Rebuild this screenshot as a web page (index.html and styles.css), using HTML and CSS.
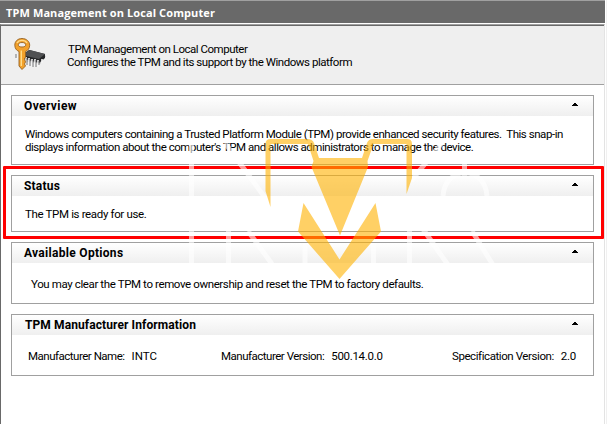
FILE: index.html
```html
<!DOCTYPE html>
<html lang="en">
<head>
<meta charset="utf-8">
<title>TPM Management on Local Computer</title>
<link rel="stylesheet" href="styles.css">
</head>
<body>
<div class="window">
  <div class="titlebar"><span>TPM Management on Local Computer</span></div>
  <main class="content">
    <header class="intro">
      <svg class="key-icon" width="34" height="34" viewBox="0 0 34 34">
        <path d="M11 16l4-3 17 5-6 8-17-3z" fill="#77777a" opacity=".4"/>
        <path d="M7 18l8-6 16 4v4l-6 5L7 20z" fill="#252628"/>
        <path d="M8 17l8-5 15 4-6 5z" fill="#505153"/>
        <path d="M3 16v5M12 19v8M15 20v8M18 21v8M21 21v8M24 22v7M28 21v4" stroke="#f5f5f5" stroke-width="1.6"/>
        <path d="M2 16v4M13 20v7M16 21v7M19 22v7M22 22v7M25 23v4" stroke="#66676a" stroke-width=".9"/>
        <path d="M8 .5C3.500 .5.800 3.500.800 7.200c0 3 1.700 5.300 4.200 6.300v14.500l3 3.500 3.500-3.500-1-2 1-2-1-3 1-2v-5.500c2.500-1 4.200-3.300 4.200-6.300C15.700 3.500 12.500.5 8 .5zm0 4c2.500 0 3.700 1 3.700 2.300S10.500 9 8 9 4.300 8.100 4.300 6.800 5.500 4.500 8 4.500z" fill="#f2a12b" fill-rule="evenodd" stroke="#966223" stroke-width=".9"/>
        <path d="M7.300 12.500V28M3 5c2-3.500 8-3.500 10 0" stroke="#ffdc8a" stroke-width="1.400" fill="none"/>
      </svg>
      <div class="intro-text"><p class="l1">TPM Management on Local Computer</p><p class="l2">Configures the TPM and its support by the Windows platform</p></div>
    </header>
    <div class="panels">
      <section class="panel overview">
        <h2 class="h-overview">Overview<svg class="arrow" width="6" height="3" shape-rendering="crispEdges"><path d="M2 0h2v1h1v1h1v1H0V2h1V1h1z"/></svg></h2>
        <div class="body"><p class="o1">Windows computers containing a Trusted Platform Module (TPM) provide enhanced security features.&nbsp; This snap-in</p><p class="o2">displays information about the computer's TPM and allows administrators to manage the device.</p></div>
      </section>
      <section class="panel status">
        <h2 class="h-status">Status<svg class="arrow" width="6" height="3" shape-rendering="crispEdges"><path d="M2 0h2v1h1v1h1v1H0V2h1V1h1z"/></svg></h2>
        <div class="body"><p class="s1">The TPM is ready for use.</p></div>
      </section>
      <section class="panel options">
        <h2 class="h-options">Available Options<svg class="arrow" width="6" height="3" shape-rendering="crispEdges"><path d="M2 0h2v1h1v1h1v1H0V2h1V1h1z"/></svg></h2>
        <div class="body"><p class="a1">You may clear the TPM to remove ownership and reset the TPM to factory defaults.</p></div>
      </section>
      <section class="panel maker">
        <h2 class="h-maker">TPM Manufacturer Information<svg class="arrow" width="6" height="3" shape-rendering="crispEdges"><path d="M2 0h2v1h1v1h1v1H0V2h1V1h1z"/></svg></h2>
        <div class="body facts"><p><span class="name">Manufacturer Name:</span><span>INTC</span></p><p><span class="name">Manufacturer Version:</span><span class="num">500.14.0.0</span></p><p><span class="spec">Specification Version:</span><span class="num">2.0</span></p></div>
      </section>
    </div>
  </main>
  <div class="highlight"></div>
  <svg class="watermark" width="607" height="424" viewBox="0 0 607 424">
    <g fill="none" stroke="#fff" stroke-width="5" opacity=".6">
      <path d="M191.500 143v121M225 143l41 56M228.500 230v34M248 231l24 33M305 243v21M373.500 243v21M409.500 230v35M442 143l-31 38M423 229l25 36M464.500 162v14M443 196c2-31 42-31 44 0M472 231l21 34"/>
    </g>
    <g fill="#ffb200" opacity=".6">
      <path d="M265.500 144q0-5 5-5h37q5 0 6.500 4l5 15h43l5-15q1.500-4 6-4h34q5 0 5 5v34l-5.500 16v-50h-33l-6 17 .5 6-28 68.500-28.500-68.500 2-6-5.500-17h-37.500v63l-5-16z"/>
      <path d="M303.500 203l36 56.500 36-56.500 5.500 28.500-41.500 47.500-41.500-47.500z"/>
    </g>
  </svg>
</div>
</body>
</html>
```
FILE: styles.css
```css
* { box-sizing: border-box; }
body { margin: 0; background: #fff; color: #000; font: 11.5px/13px Roboto, "Liberation Sans", sans-serif; }
p, h2 { margin: 0; }
p { white-space: nowrap; }
.window { position: relative; width: 607px; height: 424px; overflow: hidden; background: linear-gradient(90deg, #fff 606px, #f0f0f0 606px); }
.titlebar { width: 605px; height: 24px; padding: 5px 0 0 6px; background: #696969; border-top: 1px solid #a0a0a0; border-bottom: 1px solid #fff; color: #fff; font: bold 11px/13px "Open Sans", sans-serif; letter-spacing: .1px; }
.titlebar span { display: block; }
.content { width: 605px; height: 400px; border-top: 1px solid #a0a0a0; border-left: 1px solid #696969; border-right: 1px solid #e3e3e3; }
.intro { display: flex; width: 603px; height: 60px; border-top: 1px solid #696969; border-bottom: 1px solid #a0a0a0; background: #efefef; }
.key-icon { margin: 12px 0 0 13px; flex: none; }
.intro-text { padding: 17px 0 0 19px; }
.l1 { padding-left: 1px; letter-spacing: -.48px; }
.l2 { letter-spacing: -.46px; }
.panels { width: 583px; margin: 10px 0 0 10px; display: flex; flex-direction: column; }
.panel { border: 1px solid #a0a0a0; background: #fff; }
.overview { height: 70px; margin-bottom: 10px; }
.status { height: 57px; margin-bottom: 10px; }
.options { height: 62px; margin-bottom: 10px; }
.maker { height: 62px; }
h2 { display: flex; justify-content: space-between; height: 20px; padding: 4px 15px 0 12px; background: linear-gradient(#fff, #efefef); font: bold 12px/13px Roboto, "Liberation Sans", sans-serif; }
.arrow { margin-top: 3px; }
.h-overview { letter-spacing: .4px; }
.h-status { letter-spacing: .2px; }
.h-options { letter-spacing: .3px; }
.h-maker { letter-spacing: .1px; padding-left: 13px; }
.body { padding: 12px 0 0 13px; }
.o1 { letter-spacing: -.455px; }
.o2 { letter-spacing: -.475px; }
.s1 { letter-spacing: -.35px; }
.options .body { padding: 15px 0 0 19px; }
.a1 { letter-spacing: -.385px; }
.facts { display: grid; grid-template-columns: 193px 231px auto; padding: 15px 0 0 16px; }
.facts p { display: flex; gap: 7px; }
.name { letter-spacing: -.49px; }
.spec { letter-spacing: -.42px; }
.num { letter-spacing: -.3px; }
.highlight { position: absolute; left: 3px; top: 166px; width: 601px; height: 73px; border: 3px solid #f00; border-radius: 1px; }
.watermark { position: absolute; left: 0; top: 0; }
```
